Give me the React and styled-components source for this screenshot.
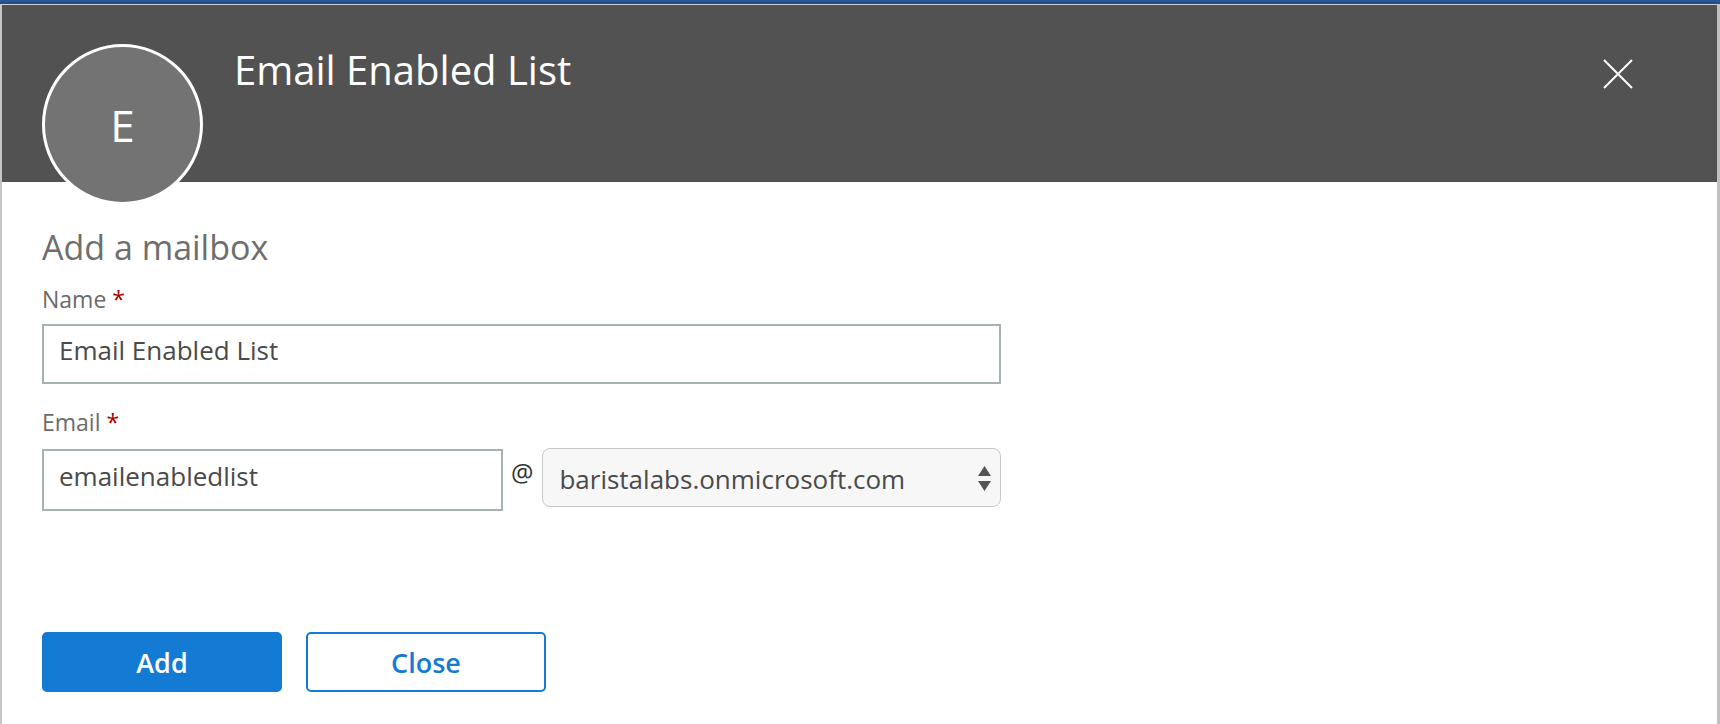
import React from "react";
import styled, { createGlobalStyle } from "styled-components";

const Global = createGlobalStyle`
  html, body { margin: 0; padding: 0; background: #ffffff; }
  body { font-family: "Open Sans", "Noto Sans", sans-serif; }
  * { box-sizing: border-box; }
`;

const Page = styled.div`
  width: 1720px;
  height: 724px;
  display: flex;
  flex-direction: column;
  overflow: hidden;
`;

const TopStrip = styled.div`
  height: 4px;
  flex: none;
  background: linear-gradient(#2a5c99, #1c4a80);
`;

const Window = styled.div`
  flex: 1;
  display: flex;
  flex-direction: column;
  border-top: 1px solid #cfd3d8;
  border-left: 2px solid #c6c6c6;
  border-right: 3px solid #c0c0c0;
  background: #ffffff;
`;

const Header = styled.header`
  position: relative;
  z-index: 1;
  height: 177px;
  flex: none;
  display: flex;
  align-items: flex-start;
  padding-left: 40px;
  background: #525252;
`;

const Avatar = styled.div`
  width: 161px;
  height: 161px;
  flex: none;
  margin-top: 39px;
  border-radius: 50%;
  border: 3px solid #ffffff;
  background: #737373;
  color: #ffffff;
  display: flex;
  align-items: center;
  justify-content: center;
  font-size: 44px;
  line-height: 1;
`;

const Title = styled.h1`
  margin: 45px 0 0 31px;
  font-size: 40px;
  line-height: 1;
  font-weight: 400;
  color: #ffffff;
`;

const CloseIcon = styled.button`
  margin: 54px 84px 0 auto;
  padding: 0;
  width: 30px;
  height: 30px;
  border: none;
  background: none;
  display: flex;
  cursor: pointer;
`;

const Body = styled.main`
  flex: 1;
  display: flex;
  flex-direction: column;
  align-items: flex-start;
  padding: 48px 40px 0;
`;

const Heading = styled.h2`
  margin: 0;
  font-size: 34px;
  line-height: 1;
  font-weight: 400;
  color: #6e6e6e;
`;

const Label = styled.label`
  display: block;
  margin-top: ${(p) => p.$top}px;
  font-size: 23px;
  line-height: 1;
  color: #6b6b6b;
`;

const Required = styled.span`
  color: #a80000;
  margin-left: 6px;
`;

const TextInput = styled.input`
  display: block;
  width: ${(p) => p.$width}px;
  height: ${(p) => p.$height}px;
  margin-top: ${(p) => p.$top}px;
  padding: 0 15px 8px;
  border: 2px solid #a6b1b4;
  border-radius: 0;
  background: #ffffff;
  font-family: "Open Sans", "Noto Sans", sans-serif;
  font-size: 26px;
  color: #4a4a4a;
  outline: none;
`;

const EmailRow = styled.div`
  display: flex;
  align-items: flex-start;
  margin-top: 14px;
`;

const At = styled.span`
  margin: 12px 9px 0 8px;
  font-size: 25px;
  line-height: 1;
  color: #333333;
`;

const SelectBox = styled.div`
  width: 459px;
  height: 59px;
  display: flex;
  align-items: center;
  justify-content: space-between;
  padding: 2px 9px 0 16px;
  border: 1.5px solid #c9c9c9;
  border-radius: 8px;
  background: #f7f7f7;
  font-size: 26px;
  line-height: 1;
  color: #4a4a4a;
`;

const Actions = styled.div`
  display: flex;
  gap: 24px;
  margin-top: 121px;
`;

const Button = styled.button`
  width: 240px;
  height: 60px;
  border-radius: 5px;
  border: 2px solid #147bd5;
  background: ${(p) => (p.$primary ? "#147bd5" : "#ffffff")};
  color: ${(p) => (p.$primary ? "#ffffff" : "#147bd5")};
  font-family: "Open Sans", "Noto Sans", sans-serif;
  font-size: 27px;
  font-weight: 600;
  line-height: 1;
  cursor: pointer;
`;

export default function App() {
  return (
    <Page>
      <Global />
      <TopStrip />
      <Window>
        <Header>
          <Avatar>E</Avatar>
          <Title>Email Enabled List</Title>
          <CloseIcon aria-label="Close">
            <svg width="30" height="30" viewBox="0 0 30 30">
              <path d="M1 1 L29 29 M29 1 L1 29" stroke="#ffffff" strokeWidth="2" fill="none" />
            </svg>
          </CloseIcon>
        </Header>
        <Body>
          <Heading>Add a mailbox</Heading>
          <Label $top={24}>
            Name<Required>*</Required>
          </Label>
          <TextInput $top={13} $width={959} $height={60} defaultValue="Email Enabled List" />
          <Label $top={27}>
            Email<Required>*</Required>
          </Label>
          <EmailRow>
            <TextInput $top={1} $width={461} $height={62} defaultValue="emailenabledlist" />
            <At>@</At>
            <SelectBox>
              <span>baristalabs.onmicrosoft.com</span>
              <svg width="13" height="25" viewBox="0 0 13 25">
                <path d="M6.5 0 L13 10 L0 10 Z M0 15 L13 15 L6.5 25 Z" fill="#555555" />
              </svg>
            </SelectBox>
          </EmailRow>
          <Actions>
            <Button $primary>Add</Button>
            <Button>Close</Button>
          </Actions>
        </Body>
      </Window>
    </Page>
  );
}
